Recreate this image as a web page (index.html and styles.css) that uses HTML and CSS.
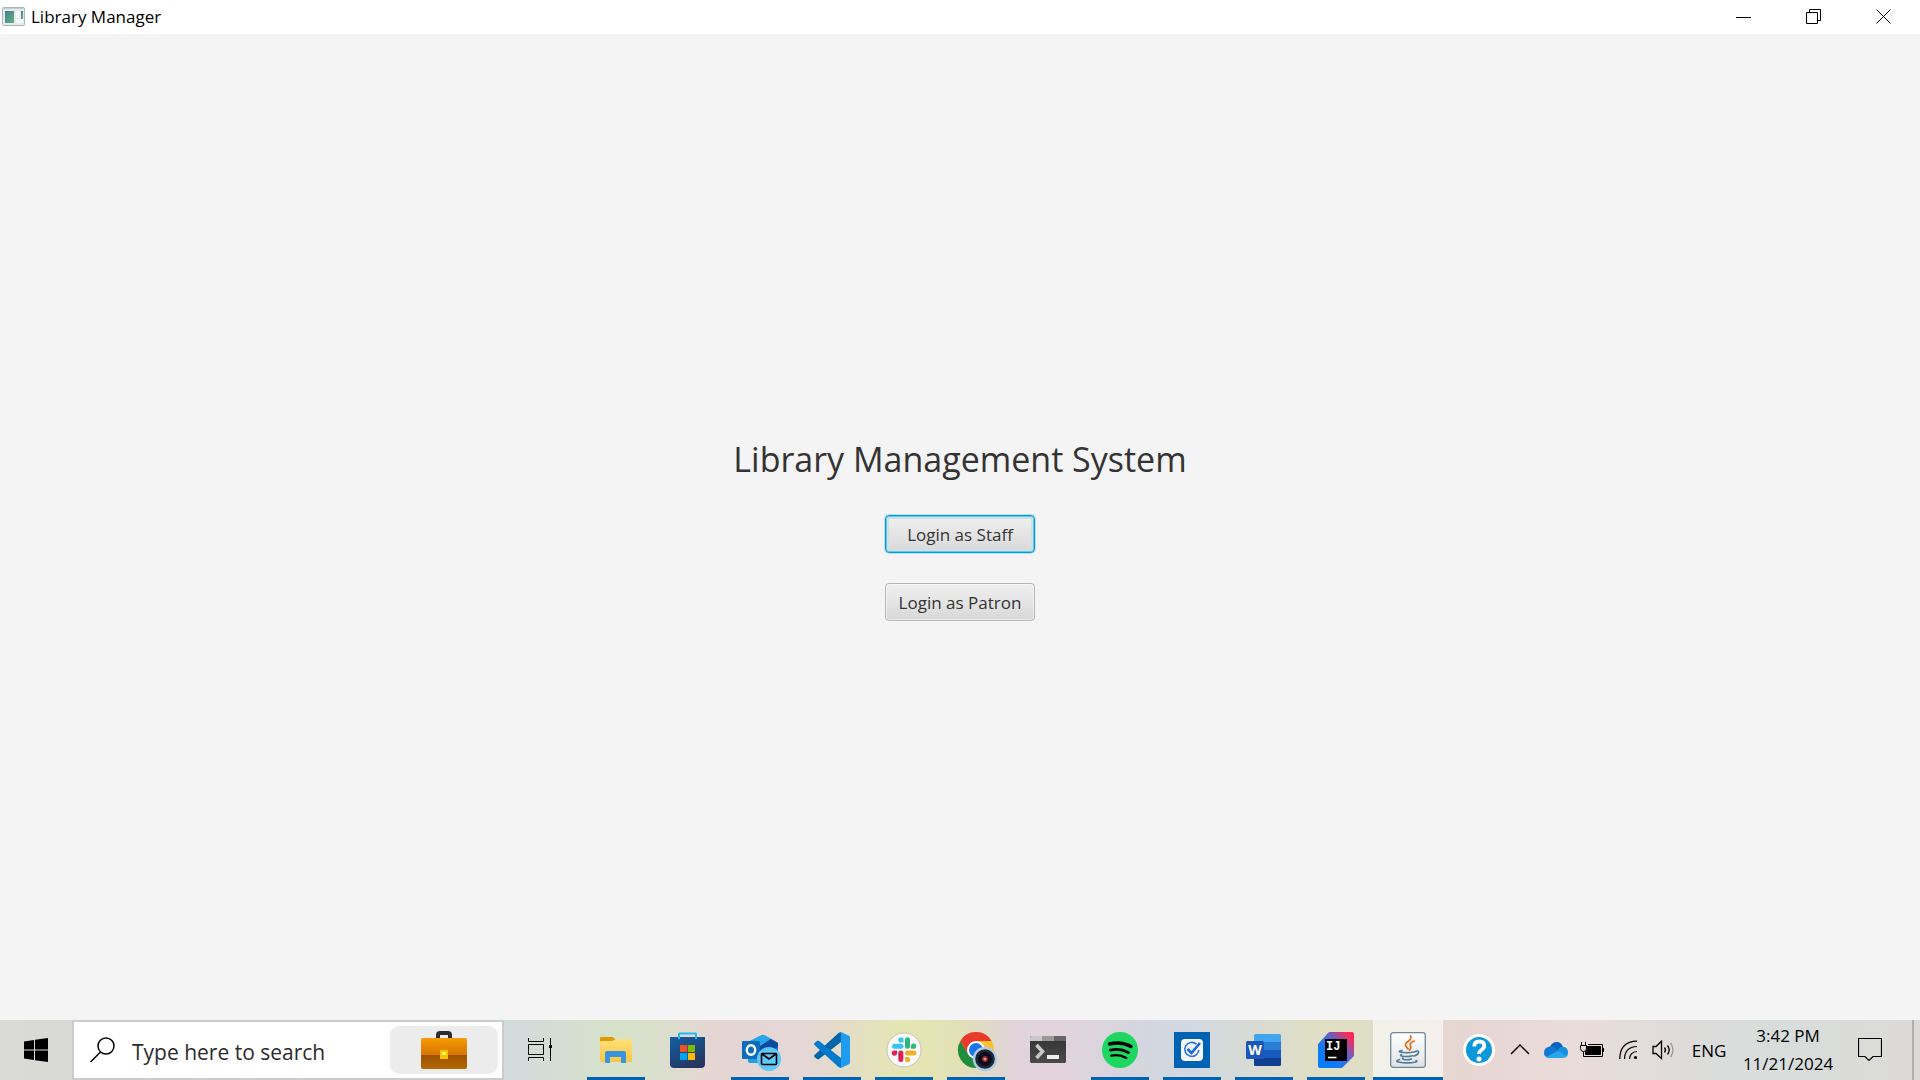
FILE: index.html
```html
<!DOCTYPE html>
<html lang="en">
<head>
<meta charset="utf-8">
<title>Library Manager</title>
<link rel="stylesheet" href="styles.css">
</head>
<body>
<div class="desktop">
  <header class="titlebar">
    <svg class="app-icon" width="24" height="20" viewBox="0 0 24 20">
      <defs><linearGradient id="win" x1="0" y1="0" x2="1" y2="1"><stop offset="0" stop-color="#3f7f96"/><stop offset="1" stop-color="#62b27c"/></linearGradient></defs>
      <rect x=".5" y=".5" width="22" height="18" rx="1" fill="#e8eaed" stroke="#aeb4bc"/>
      <path d="M1 1.500h21" stroke="#c5cad1"/>
      <rect x="3" y="4" width="9" height="12" fill="url(#win)"/>
      <path d="M14 4h4v7h-4zM14 12h7v4h-7z" fill="#f6f7f8"/>
      <rect x="19" y="4" width="2" height="8" fill="url(#win)"/>
    </svg>
    <h2 class="titlebar-text">Library Manager</h2>
    <div class="window-controls">
      <button class="control" aria-label="Minimize"><svg width="16" height="16" viewBox="0 0 16 16"><path d="M0 8.500h15" stroke="#000"/></svg></button>
      <button class="control" aria-label="Restore"><svg width="16" height="16" viewBox="0 0 16 16" fill="none" stroke="#000"><path d="M.5 3.500h11v11H.5zM3.500 3.500v-3h11v11h-3"/></svg></button>
      <button class="control" aria-label="Close"><svg width="16" height="16" viewBox="0 0 16 16"><path d="M.5.5l14 14m0-14l-14 14" stroke="#000"/></svg></button>
    </div>
  </header>

  <main class="content">
    <h1 class="heading">Library Management System</h1>
    <button class="login focused">Login as Staff</button>
    <button class="login">Login as Patron</button>
  </main>

  <footer class="taskbar">
    <button class="start" aria-label="Start"><svg width="24" height="24" viewBox="0 0 24 24"><path d="M0 3.400L10 2v9.500H0zM11 1.800L24 0v11.500H11zM0 12.500h10V22L0 20.600zM11 12.500h13V24l-13-1.800z"/></svg></button>
    <div class="search">
      <svg class="search-icon" width="26" height="26" viewBox="0 0 26 26" fill="none" stroke="#000" stroke-width="1.500"><circle cx="16" cy="9" r="8"/><path d="M10.500 15L.5 25"/></svg>
      <input class="search-input" type="text" placeholder="Type here to search" aria-label="Search">
      <button class="search-highlight" aria-label="Search highlights">
        <svg width="46" height="38" viewBox="0 0 46 38">
          <defs>
            <linearGradient id="caseTop" x2="0" y2="1"><stop stop-color="#f79a05"/><stop offset="1" stop-color="#d67600"/></linearGradient>
            <linearGradient id="caseLow" x2="0" y2="1"><stop stop-color="#8a4300"/><stop offset="1" stop-color="#b56800"/></linearGradient>
          </defs>
          <path d="M17 7V4q0-2 2-2h8q2 0 2 2v3" fill="none" stroke="#2c2c30" stroke-width="4"/>
          <rect y="14" width="46" height="24" rx="2" fill="url(#caseLow)"/>
          <path d="M0 24V9q0-2 2-2h42q2 0 2 2v15z" fill="url(#caseTop)"/>
          <rect x="19" y="19" width="8" height="9" fill="#f5c400"/><rect x="21" y="21" width="4" height="3" fill="#fff06a"/>
        </svg>
      </button>
    </div>
    <button class="task-view" aria-label="Task View"><svg width="24" height="24" viewBox="0 0 24 24" fill="none" stroke="#000"><path d="M.5 0v3.500h15V0M.5 6.500h15v10H.5zM.5 23v-3.500h15V23M22.500 0v23"/><path d="M21 7h3v3h-3z" fill="#000" stroke="none"/></svg></button>

    <nav class="apps" aria-label="Applications">
      <button class="app running" aria-label="File Explorer"><svg class="icon" viewBox="0 0 36 36">
        <defs><linearGradient id="fold" x2="0" y2="1"><stop stop-color="#ffe07a"/><stop offset="1" stop-color="#fcc645"/></linearGradient></defs>
        <path d="M2 13V6q0-1 1-1h11q1 0 2 1l2 2v5z" fill="#e09b00"/>
        <path d="M2 10q0-1 1-1h11l4-2h15q1 0 1 1v21q0 1-1 1H3q-1 0-1-1z" fill="url(#fold)"/>
        <path d="M7 31V21q0-2 2-2h17q2 0 2 2v10h-5v-6H12v6z" fill="#3896e0"/>
      </svg></button>
      <button class="app" aria-label="Microsoft Store"><svg class="icon" viewBox="0 0 36 36">
        <defs><linearGradient id="store" x2=".5" y2="1"><stop stop-color="#1260a5"/><stop offset="1" stop-color="#253760"/></linearGradient></defs>
        <path d="M0 5h35v27q0 4-4 4H4q-4 0-4-4z" fill="url(#store)"/>
        <path d="M9 7V2q0-.5.5-.5h16q.5 0 .5.5v5" fill="none" stroke="#23b8f2" stroke-width="2"/>
        <path d="M10 13h7.300v7H10z" fill="#f25022"/><path d="M18 13h7v7h-7z" fill="#7fba00"/><path d="M10 21h7.300v7H10z" fill="#00a4ef"/><path d="M18 21h7v7h-7z" fill="#ffb900"/>
      </svg></button>
      <button class="app running" aria-label="Outlook"><svg class="icon" viewBox="0 0 36 36">
        <path d="M6 10L19 3.500q2-1 4 0L36 11v18q0 2-2 2H9q-3 0-3-3z" fill="#1479cf"/>
        <path d="M8 9l12-6q1-.5 2 0l7 4-13 9z" fill="#28a8ea"/><path d="M29 7l7 4v4L21 23l-6-7z" fill="#0a4ba0"/><path d="M6 18l25 13H9q-3 0-3-3z" fill="#20a0df"/>
        <rect y="9" width="18" height="18" rx="1" fill="#0f6cbd"/><ellipse cx="9" cy="18" rx="4.200" ry="4.800" fill="none" stroke="#fff" stroke-width="2.400"/>
        <circle cx="27" cy="27" r="12" fill="#5ec8fa"/><rect x="19.500" y="21.500" width="15" height="11" rx="1" fill="none" stroke="#000" stroke-width="1.600"/><path d="M20 22l7 5 7-5" fill="none" stroke="#000" stroke-width="1.600"/>
      </svg></button>
      <button class="app running" aria-label="Visual Studio Code"><svg class="icon" viewBox="0 0 36 36">
        <path d="M27 0v10L5 27q-1 .7-2 0l-2.500-2q-1-1 0-2L24.500 1z" fill="#0065a9"/>
        <path d="M27 36V26L5 9q-1-.7-2 0L.5 11q-1 1 0 2l24 22z" fill="#007acc"/>
        <path d="M27 0l8 3.800q1 .5 1 1.700v25q0 1.200-1 1.700L27 36q-1.500 0-2.500-1 2.500 1.500 2.500-1V2q0-2.500-2.500-1 1-1 2.500-1z" fill="#1f9cf0"/>
      </svg></button>
      <button class="app running" aria-label="Slack"><svg class="icon" viewBox="0 0 36 36">
        <circle cx="18" cy="18" r="17" fill="#fafafa" stroke="#c9c5b8"/>
        <g fill="#36c5f0"><rect x="6" y="11.700" width="11.500" height="5" rx="2.500"/><path d="M17.500 10.500H15A2.600 2.600 0 1117.500 8z"/></g>
        <g fill="#2eb67d"><rect x="19" y="5.300" width="5" height="11.500" rx="2.500"/><path d="M25 16.800v-2.500a2.600 2.600 0 112.500 2.500z"/></g>
        <g fill="#ecb22e"><rect x="19" y="18.500" width="11.500" height="5" rx="2.500"/><path d="M19 25h2.500a2.600 2.600 0 11-2.500 2.500z"/></g>
        <g fill="#e01e5a"><rect x="12.300" y="18.500" width="5" height="11.500" rx="2.500"/><path d="M11 18.500V21a2.600 2.600 0 11-2.500-2.500z"/></g>
      </svg></button>
      <button class="app running" aria-label="Google Chrome"><svg class="icon" viewBox="0 0 36 36">
        <circle cx="18" cy="18" r="18" fill="#fbc02d"/>
        <path d="M2.400 9A18 18 0 0018 36l7.800-13.500H10.200z" fill="#1e8e3e"/>
        <path d="M2.400 9a18 18 0 0131.200 0H18l-7.800 13.500z" fill="#ea3a2e"/>
        <circle cx="18" cy="18" r="9" fill="#fff"/><circle cx="18" cy="18" r="7" fill="#1a73e8"/>
        <circle cx="27" cy="27" r="11" fill="#1f2636" stroke="#b0cce2" stroke-width="2.400"/><circle cx="27" cy="27" r="7" fill="#100a1d"/><circle cx="27" cy="27" r="3" fill="#7e2a3c"/><circle cx="27" cy="27" r="1.600" fill="#ff8a55"/>
      </svg></button>
      <button class="app" aria-label="Terminal"><svg class="icon" viewBox="0 0 36 36">
        <defs><linearGradient id="term" x2="0" y2="1"><stop stop-color="#333"/><stop offset="1" stop-color="#4a4a4a"/></linearGradient></defs>
        <rect y="4" width="36" height="27" rx="1.500" fill="url(#term)"/><path d="M0 9V5.500Q0 4 1.500 4H12v5z" fill="#c8c8c8"/><path d="M12 4h12v5H12z" fill="#999"/><path d="M24 4h10.500Q36 4 36 5.500V9H24z" fill="#666"/>
        <path d="M6.500 13l6 6.500-6 6.500" fill="none" stroke="#c8c8c8" stroke-width="3.600"/><path d="M17 23h12v4H17z" fill="#eee"/>
      </svg></button>
      <button class="app running" aria-label="Spotify"><svg class="icon" viewBox="0 0 36 36">
        <circle cx="18" cy="18" r="18" fill="#1ed760"/><g fill="none" stroke="#000" stroke-linecap="round"><path d="M7.500 12q11.500-3 21.500 2.500" stroke-width="3.400"/><path d="M8.500 18.200q9.500-2.500 18 2.400" stroke-width="2.800"/><path d="M9.300 23.700q8-2 15 2.200" stroke-width="2.300"/></g>
      </svg></button>
      <button class="app running" aria-label="Tasks"><svg class="icon" viewBox="0 0 36 36">
        <path d="M0 0h36v36H0z" fill="#0063b1"/><rect x="7" y="7" width="22" height="22" rx="4" fill="#f4f5f8"/><path d="M22.500 12.200A7 7 0 1024.800 18" fill="none" stroke="#2f74e0" stroke-width="1.600"/><path d="M13.500 17l4 4L26 11" fill="none" stroke="#1f66d8" stroke-width="2.600"/>
      </svg></button>
      <button class="app running" aria-label="Word"><svg class="icon" viewBox="0 0 36 36">
        <path d="M8 10V3.500Q8 2 9.500 2h24Q35 2 35 3.500V10z" fill="#41a5ee"/><path d="M8 10h27v8H8z" fill="#2b7cd3"/><path d="M8 18h27v8H8z" fill="#185abd"/><path d="M8 26h27v6.500q0 1.500-1.500 1.500h-24Q8 34 8 32.500z" fill="#103f91"/>
        <rect y="9" width="18" height="18" rx="1.500" fill="#1b56b8"/><text class="word-letter" x="9" y="23" text-anchor="middle">W</text>
      </svg></button>
      <button class="app running" aria-label="IntelliJ IDEA"><svg class="icon" viewBox="0 0 36 36">
        <defs><linearGradient id="idea" x1=".25" y1=".7" x2="1" y2="0"><stop stop-color="#087cfa"/><stop offset=".35" stop-color="#3d6fe0"/><stop offset=".85" stop-color="#fe2857"/></linearGradient></defs>
        <path d="M12 0h22q2 0 2 2v21q0 1-.8 1.800L25 35q-1 1-2 1H2q-2 0-2-2V13q0-1 .8-1.800L10 1q1-1 2-1z" fill="url(#idea)"/>
        <path d="M7 7h22v22H7z"/><text class="idea-letters" x="8" y="18">IJ</text><path d="M10 25.500h8.500" stroke="#fff" stroke-width="1.600"/>
      </svg></button>
      <button class="app running active" aria-label="Java"><svg class="icon" viewBox="0 0 36 36">
        <defs><linearGradient id="java" x2="0" y2="1"><stop stop-color="#fff"/><stop offset="1" stop-color="#dfe2e5"/></linearGradient></defs>
        <rect x=".7" y=".7" width="34.600" height="34.600" rx="2.500" fill="url(#java)" stroke="#708796" stroke-width="1.300"/>
        <g fill="none" stroke="#e76f1c" stroke-width="1.800" stroke-linecap="round"><path d="M20.500 4q1.500 3-2.500 5.500-4 2.500-1.500 5.500l1.500 2"/><path d="M24 9q-5 2-3.500 5 1 2-1 4"/></g>
        <g fill="none" stroke="#527a94" stroke-width="1.600" stroke-linecap="round"><path d="M12 18.500q-4 .7-2 1.500 7 1.500 15-.3M11.500 22.500q-2 1 0 1.500 6 1.200 11-.3M13 26q-1.500 1 1 1.500 4 .8 7.500-.5M9.500 27.500q-5 1.500-1 2.500 9 1.800 17.500 0 2-.6 0-1.500M25 19.500q4-1.500 3.500 1-.5 2.500-4.500 3.500"/></g>
      </svg></button>
    </nav>

    <div class="tray">
      <button class="tray-item help" aria-label="Help"><svg width="32" height="32" viewBox="0 0 32 32"><circle cx="16" cy="16" r="16" fill="#fff"/><circle cx="16" cy="16" r="13" fill="#0a98da"/><path d="M11.200 12.500q0-5 5-5t5 4.300q0 2.500-2.800 4.200-2.400 1.500-2.400 4" fill="none" stroke="#fff" stroke-width="3.800"/><circle cx="16" cy="25" r="2.500" fill="#fff"/></svg></button>
      <button class="tray-item" aria-label="Show hidden icons"><svg width="20" height="20" viewBox="0 0 20 20"><path d="M1 14l9-9 9 9" fill="none" stroke="#000" stroke-width="1.500"/></svg></button>
      <button class="tray-item" aria-label="OneDrive"><svg width="24" height="16" viewBox="0 0 24 16"><path d="M6 5q2-5 7-5 4 0 6 5l-6 5z" fill="#0364b8"/><path d="M5 15.500q-5 0-5-5t6-6q3-.5 6 2l4 3-9 6z" fill="#0f78d4"/><path d="M14 8q1.500-3.500 5-3.200 5 .7 5 5.700t-5 5l-9-4z" fill="#1490df"/><path d="M2 15l12-6 9 5q-1.500 2-4 2H5q-2 0-3-1z" fill="#28a8ea"/></svg></button>
      <button class="tray-item" aria-label="Battery"><svg width="24" height="18" viewBox="0 0 24 18" fill="none" stroke="#000"><path d="M8 3.500h14.500v12h-19V11"/><path d="M7.500 5.500h13v8h-15v-3z" fill="#000"/><path d="M23.500 7v4"/><path d="M.5 4.500h6v3q0 3-3 3t-3-3zM1.500 1v3M5.500 1v3" fill="#e6dad7"/></svg></button>
      <button class="tray-item" aria-label="Wi-Fi"><svg width="19" height="20" viewBox="0 0 19 20" fill="none" stroke="#000" stroke-width="1.200"><path d="M.8 19Q1 1.500 18 1.200M5.500 19Q5.800 7 18 6.500M10.500 19q.5-7 7.500-7.500"/><circle cx="16.500" cy="17.500" r="1.600" fill="#000" stroke="none"/></svg></button>
      <button class="tray-item" aria-label="Volume"><svg width="24" height="20" viewBox="0 0 24 20" fill="none" stroke="#000" stroke-width="1.300"><path d="M1 6.500h3l5.500-5.300v17.300L4 13.500H1z"/><path d="M12.500 7.500q2 2.500 0 5M15.500 5.500q3.500 4.500 0 9"/><path d="M18.500 3q5 7 0 14" stroke="#999"/></svg></button>
      <button class="language">ENG</button>
      <button class="clock"><span>3:42 PM</span><span>11/21/2024</span></button>
      <button class="notifications" aria-label="Notifications"><svg width="24" height="24" viewBox="0 0 24 24"><path d="M.5.5h23v18h-8.500L11 22.500 7 18.500H.5z" fill="none" stroke="#000" stroke-width="1.200"/></svg></button>
      <button class="show-desktop" aria-label="Show desktop"></button>
    </div>
  </footer>
</div>
</body>
</html>
```
FILE: styles.css
```css
* {
  box-sizing: border-box;
}

body {
  margin: 0;
  font-family: "Open Sans", "Noto Sans", sans-serif;
  color: #000;
}

button {
  margin: 0;
  padding: 0;
  border: 0;
  background: none;
  font: inherit;
  color: inherit;
}

svg {
  display: block;
  flex: none;
}

.desktop {
  display: flex;
  flex-direction: column;
  min-height: 100vh;
  background: #f4f4f4;
}

.titlebar {
  display: flex;
  align-items: center;
  height: 34px;
  padding: 0 1px 0 2px;
  background: #fff;
}

.titlebar-text {
  margin: 0 auto 0 5px;
  font-size: 17px;
  font-weight: 400;
  line-height: 36px;
}

.window-controls {
  display: flex;
}

.control {
  display: flex;
  align-items: center;
  justify-content: center;
  width: 70px;
  height: 34px;
}

.content {
  display: flex;
  flex: 1;
  flex-direction: column;
  align-items: center;
  justify-content: center;
  gap: 30px;
  color: #333;
}

.heading {
  margin: 0;
  font-size: 34px;
  font-weight: 400;
  line-height: 52px;
}

.login {
  width: 150px;
  height: 38px;
  border: 1px solid #b5b5b5;
  border-radius: 4px;
  background: linear-gradient(#f0f0f0, #d8d8d8);
  box-shadow: inset 0 0 0 1px rgba(255, 255, 255, 0.5), 0 1px 0 #fafafa;
  font-size: 17px;
}

.login.focused {
  border-color: #039ed3;
  box-shadow: inset 0 0 0 1px #6fc3e0, inset 0 0 0 3px #cbe2e9, 0 0 0 1px #b4e0ee;
}

.taskbar {
  display: flex;
  align-items: stretch;
  height: 60px;
  background: linear-gradient(90deg, #dadad6 0%, #d3dbda 27%, #d6e2ca 32%, #dae0cc 34%, #e5d6d4 37%, #e4d7d5 42%, #e4e6b2 47%, #e3e0b8 50%, #e0d3dc 53%, #e3d3dc 55%, #d5d5de 59%, #d1d8e0 62%, #e1dfc4 69%, #deddc8 72%, #e6d6d2 76%, #eadcda 82%, #dddcdb 88%, #d8dddb 92%, #dcdad8 100%);
}

.start,
.task-view {
  display: flex;
  align-items: center;
  justify-content: center;
  width: 72px;
}

.task-view {
  margin-right: 4px;
}

.search {
  display: flex;
  align-items: center;
  width: 432px;
  padding: 0 4px 0 16px;
  border: 2px solid #ccc;
  background: #fff;
}

.search-input {
  flex: 1;
  min-width: 0;
  height: 40px;
  padding: 4px 0 0 16px;
  border: 0;
  outline: 0;
  background: none;
  font: inherit;
  font-size: 21px;
}

.search-input::placeholder {
  color: #2b2b2b;
  opacity: 1;
}

.search-highlight {
  display: flex;
  align-items: center;
  justify-content: center;
  width: 108px;
  height: 48px;
  border-radius: 9px;
  background: #ececec;
}

.apps {
  display: flex;
}

.app {
  display: flex;
  align-items: center;
  justify-content: center;
  width: 72px;
  background: no-repeat center bottom / 58px 3px;
}

.app.running {
  background-image: linear-gradient(#0063b1, #0063b1);
}

.app.active {
  width: 70px;
  margin: 0 1px;
  background-color: rgba(255, 255, 255, 0.6);
  background-size: 100% 3px;
}

.icon {
  width: 36px;
  height: 36px;
  overflow: visible;
}

.word-letter {
  fill: #fff;
  font-size: 14px;
  font-weight: 700;
}

.idea-letters {
  fill: #fff;
  font-family: "Liberation Mono", monospace;
  font-size: 12px;
  font-weight: 700;
}

.tray {
  display: flex;
  margin-left: auto;
  font-size: 17px;
}

.tray-item {
  display: flex;
  align-items: center;
  justify-content: center;
  width: 36px;
}

.help {
  margin-right: 5px;
}

.language {
  width: 54px;
}

.clock {
  display: flex;
  flex-direction: column;
  justify-content: center;
  width: 104px;
  line-height: 28px;
}

.notifications {
  display: flex;
  align-items: center;
  justify-content: center;
  width: 60px;
  margin-right: 12px;
}

.show-desktop {
  width: 8px;
  border-left: 2px solid #b0b0b0;
}
```
